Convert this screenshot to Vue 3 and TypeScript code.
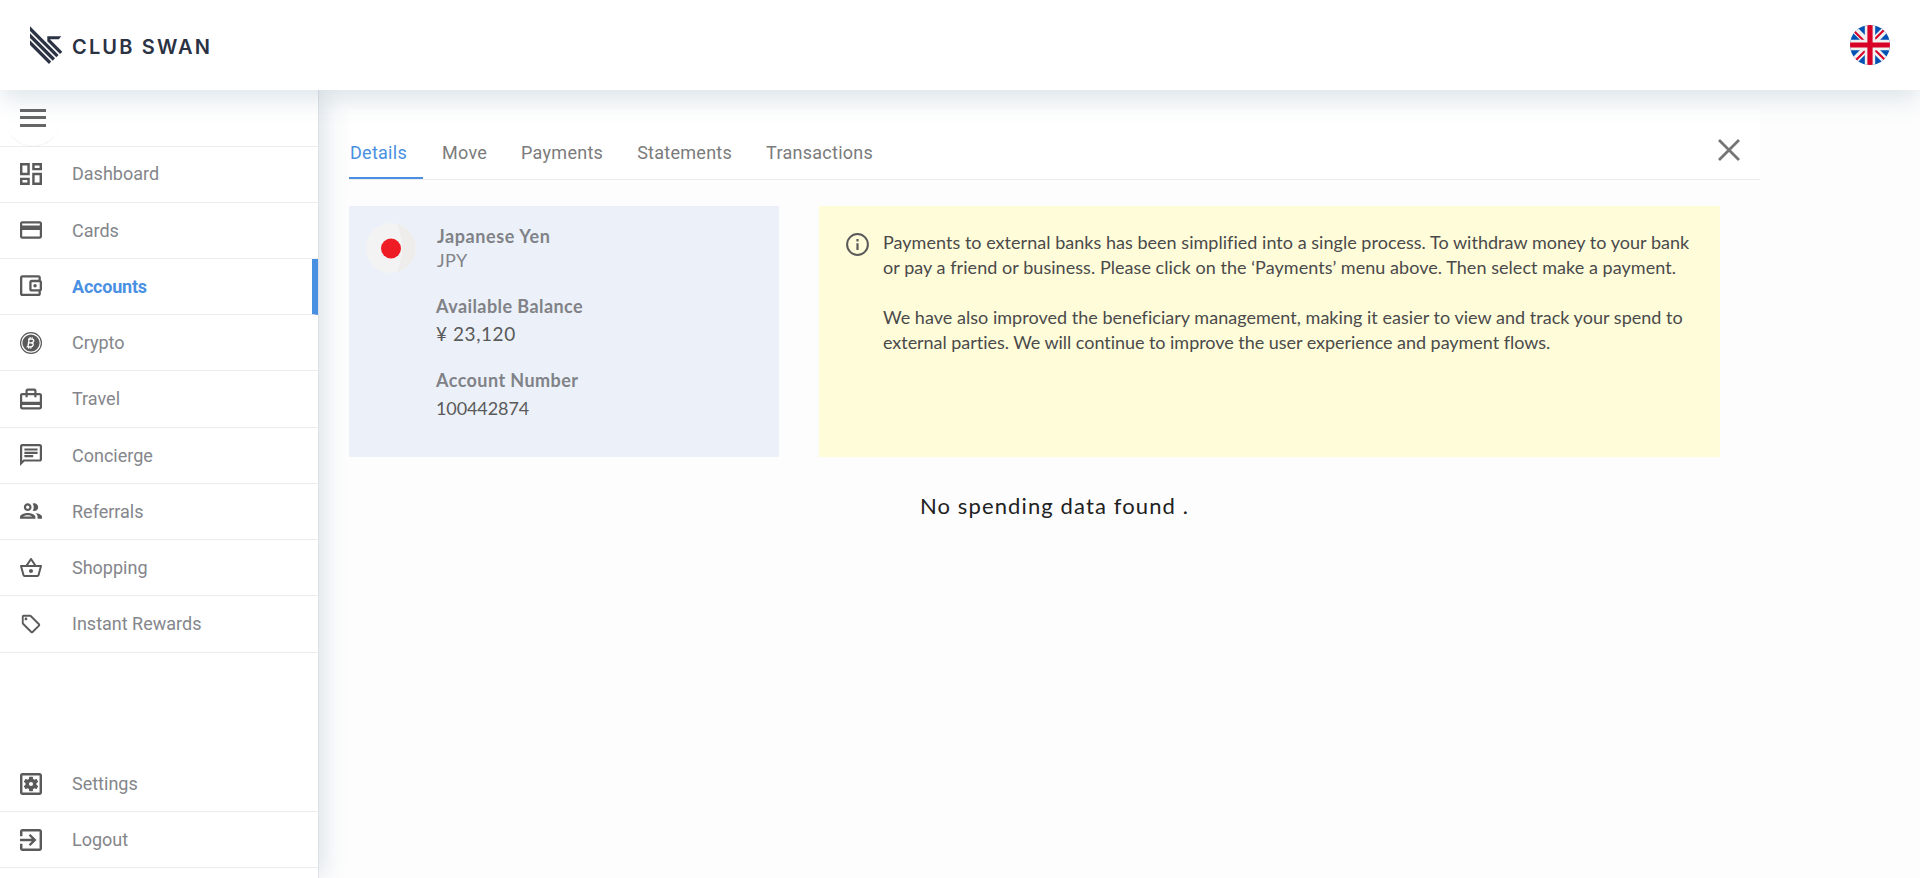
<script setup lang="ts">
interface NavItem {
  label: string
  icon: string
  active?: boolean
}

const icons: Record<string, string> = {
  dashboard: 'M19 5v2h-4V5h4M9 5v6H5V5h4m10 8v6h-4v-6h4M9 17v2H5v-2h4M21 3h-8v6h8V3zM11 3H3v10h8V3zm10 8h-8v10h8V11zm-10 4H3v6h8v-6z',
  cards: 'M20 4H4c-1.11 0-1.99.89-1.99 2L2 18c0 1.11.89 2 2 2h16c1.11 0 2-.89 2-2V6c0-1.11-.89-2-2-2zm0 14H4v-6h16v6zm0-10H4V6h16v2z',
  accounts: 'M21 7.28V5c0-1.1-.9-2-2-2H5c-1.11 0-2 .9-2 2v14c0 1.1.89 2 2 2h14c1.1 0 2-.9 2-2v-2.28c.59-.35 1-.98 1-1.72V9c0-.74-.41-1.38-1-1.72zM20 9v6h-7V9h7zM5 19V5h14v2h-6c-1.1 0-2 .9-2 2v6c0 1.1.9 2 2 2h6v2H5z',
  travel: 'M20 6h-3V4c0-1.11-.89-2-2-2H9c-1.11 0-2 .89-2 2v2H4c-1.11 0-2 .89-2 2v11c0 1.11.89 2 2 2h16c1.11 0 2-.89 2-2V8c0-1.11-.89-2-2-2zM9 4h6v2H9V4zm11 15H4v-2h16v2zm0-5H4V8h3v2h2V8h6v2h2V8h3v6z',
  concierge: 'M4 4h16v12H5.17L4 17.17V4m0-2c-1.1 0-1.99.9-1.99 2L2 22l4-4h14c1.1 0 2-.9 2-2V4c0-1.1-.9-2-2-2H4zm2 10h8v2H6v-2zm0-3h12v2H6V9zm0-3h12v2H6V6z',
  referrals: 'M9 13.75c-2.34 0-7 1.17-7 3.5V19h14v-1.75c0-2.33-4.66-3.5-7-3.5zM4.34 17c.84-.58 2.87-1.25 4.66-1.25s3.82.67 4.66 1.25H4.34zM9 12c1.93 0 3.5-1.57 3.5-3.5S10.93 5 9 5 5.5 6.57 5.5 8.5 7.07 12 9 12zm0-5c.83 0 1.5.67 1.5 1.5S9.83 10 9 10s-1.5-.67-1.5-1.5S8.17 7 9 7zm7.04 6.81c1.16.84 1.96 1.96 1.96 3.44V19h4v-1.75c0-2.02-3.5-3.17-5.96-3.44zM15 12c1.93 0 3.5-1.57 3.5-3.5S16.93 5 15 5c-.54 0-1.04.13-1.5.35.63.89 1 1.98 1 3.15s-.37 2.26-1 3.15c.46.22.96.35 1.5.35z',
  shopping: 'M22 9h-4.79l-4.38-6.56c-.19-.28-.51-.42-.83-.42s-.64.14-.83.43L6.79 9H2c-.55 0-1 .45-1 1 0 .09.01.18.04.27l2.54 9.27c.23.84 1 1.46 1.92 1.46h13c.92 0 1.69-.62 1.93-1.46l2.54-9.27L23 10c0-.55-.45-1-1-1zM12 4.8L14.8 9H9.2L12 4.8zM18.5 19l-12.99.01L3.31 11H20.7l-2.2 8zM12 13c-1.1 0-2 .9-2 2s.9 2 2 2 2-.9 2-2-.9-2-2-2z',
  rewards: 'M21.41 11.58l-9-9C12.05 2.22 11.55 2 11 2H4c-1.1 0-2 .9-2 2v7c0 .55.22 1.05.59 1.42l9 9c.36.36.86.58 1.41.58s1.05-.22 1.41-.59l7-7c.37-.36.59-.86.59-1.41s-.23-1.06-.59-1.42zM13 20.01L4 11V4h7v-.01l9 9-7 7.02zM6.5 5C5.67 5 5 5.67 5 6.5S5.67 8 6.5 8 8 7.33 8 6.5 7.33 5 6.5 5z',
  settings: 'M19 3H5c-1.11 0-2 .9-2 2v14c0 1.1.89 2 2 2h14c1.11 0 2-.9 2-2V5c0-1.1-.89-2-2-2zm0 16H5V5h14v14z',
  logout: 'M10.09 15.59L11.5 17l5-5-5-5-1.41 1.41L12.67 11H3v2h9.67l-2.58 2.59zM19 3H5c-1.11 0-2 .9-2 2v4h2V5h14v14H5v-4H3v4c0 1.1.89 2 2 2h14c1.1 0 2-.9 2-2V5c0-1.1-.9-2-2-2z',
}

const gear = 'M17.25 12c0-.23-.02-.46-.05-.68l1.48-1.16c.13-.11.17-.3.08-.45l-1.4-2.42c-.09-.15-.27-.21-.43-.15l-1.74.7c-.36-.28-.75-.51-1.18-.69l-.26-1.85c-.03-.17-.18-.3-.35-.3h-2.8c-.17 0-.32.13-.35.3l-.26 1.85c-.43.18-.82.41-1.18.69l-1.74-.7c-.16-.06-.34 0-.43.15l-1.4 2.42c-.09.15-.05.34.08.45l1.48 1.16c-.03.22-.05.45-.05.68s.02.46.05.68l-1.48 1.16c-.13.11-.17.3-.08.45l1.4 2.42c.09.15.27.21.43.15l1.74-.7c.36.28.75.51 1.18.69l.26 1.85c.03.17.18.3.35.3h2.8c.17 0 .32-.13.35-.3l.26-1.85c.43-.18.82-.41 1.18-.69l1.74.7c.16.06.34 0 .43-.15l1.4-2.42c.09-.15.05-.34-.08-.45l-1.48-1.16c.03-.22.05-.45.05-.68zM12 14a2 2 0 1 1 0-4 2 2 0 0 1 0 4z'

// Crop windows that make each 24-unit glyph fill the 22px icon box.
const boxes: Record<string, string> = {
  dashboard: '3 3 18 18',
  cards: '2 2 20 20',
  accounts: '3 2.8 19 19',
  travel: '2 1.5 20 20',
  concierge: '2 2 20 20',
  referrals: '2 2 20 20',
  shopping: '1 1 22 22',
  rewards: '0 0 24 24',
  settings: '3 3 18 18',
  logout: '3 3 18 18',
}

const mainNav: NavItem[] = [
  { label: 'Dashboard', icon: 'dashboard' },
  { label: 'Cards', icon: 'cards' },
  { label: 'Accounts', icon: 'accounts', active: true },
  { label: 'Crypto', icon: 'crypto' },
  { label: 'Travel', icon: 'travel' },
  { label: 'Concierge', icon: 'concierge' },
  { label: 'Referrals', icon: 'referrals' },
  { label: 'Shopping', icon: 'shopping' },
  { label: 'Instant Rewards', icon: 'rewards' },
]

const footNav: NavItem[] = [
  { label: 'Settings', icon: 'settings' },
  { label: 'Logout', icon: 'logout' },
]

const tabs = ['Details', 'Move', 'Payments', 'Statements', 'Transactions']
</script>

<template>
  <div class="page">
    <header class="topbar">
      <div class="brand">
        <svg class="mark" viewBox="0 0 33 39" width="33" height="39">
          <g fill="#2b3244">
            <path d="M0 .3L28.6 28.9L26.3 31.3L0 5Z" />
            <path d="M0 7.3L25 32.3L22.7 34.7L0 12Z" />
            <path d="M0 14.3L21.2 35.5L19 38L0 19Z" />
            <path d="M17.300 10.200H31.300L28.800 13.300H19.900L32.300 25.700L30 28L17.300 15.300Z" />
          </g>
        </svg>
        <svg class="wordmark" viewBox="0 0 150 26" width="150" height="26">
          <text x="-1" y="22" textLength="138" lengthAdjust="spacing">CLUB SWAN</text>
        </svg>
      </div>
      <svg class="lang" viewBox="0 0 40 40" width="40" height="40">
        <defs><clipPath id="uk"><circle cx="20" cy="20" r="20" /></clipPath></defs>
        <g clip-path="url(#uk)">
          <rect width="40" height="40" fill="#0052b4" />
          <path d="M0 0L40 40M40 0L0 40" stroke="#f0f0f0" stroke-width="7" />
          <path d="M4 6L15 17M25 14L36 3M4 37L15 26M25 25L37 37" stroke="#d80027" stroke-width="2" />
          <path d="M20 0V40M0 20H40" stroke="#f0f0f0" stroke-width="10.4" />
          <path d="M20 0V40M0 20H40" stroke="#d80027" stroke-width="5.2" />
        </g>
      </svg>
    </header>

    <div class="body">
      <aside class="sidebar">
        <div class="toggle-row">
          <button class="toggle" aria-label="Menu">
            <span></span><span></span><span></span>
          </button>
        </div>
        <nav class="nav">
          <a v-for="item in mainNav" :key="item.label" class="nav-item" :class="{ active: item.active }">
            <svg v-if="item.icon === 'crypto'" class="ico" viewBox="0 0 22 22">
              <circle cx="11" cy="11" r="10.4" fill="none" stroke="#5a5a5a" stroke-width="1.2" />
              <circle cx="11" cy="11" r="8.6" fill="#5a5a5a" />
              <path d="M9.2 6.5L7.9 15.3M8 7.2H11.6Q14.3 7.3 13.7 9.3Q13.2 10.9 10.9 10.9H8.8M10.9 10.9Q13.7 11 13.2 13Q12.7 14.9 10.2 14.9H6.6M10.2 5.2L9.9 7M12.3 5.3L12 7.1M8.900 15L8.600 16.700M11 15L10.700 16.700" fill="none" stroke="#fff" stroke-width="1.3" />
            </svg>
            <svg v-else class="ico" :viewBox="boxes[item.icon]">
              <path :d="icons[item.icon]" />
              <circle v-if="item.icon === 'accounts'" cx="16" cy="12" r="1.5" />
            </svg>
            <span>{{ item.label }}</span>
          </a>
        </nav>
        <nav class="nav foot">
          <a v-for="item in footNav" :key="item.label" class="nav-item">
            <svg class="ico" :viewBox="boxes[item.icon]">
              <path :d="icons[item.icon]" />
              <path v-if="item.icon === 'settings'" :d="gear" transform="translate(1.8 1.8) scale(.85)" />
            </svg>
            <span>{{ item.label }}</span>
          </a>
        </nav>
      </aside>

      <main class="content">
        <div class="tabbar">
          <div class="tabs">
            <a v-for="(tab, i) in tabs" :key="tab" class="tab" :class="{ current: i === 0 }">{{ tab }}</a>
          </div>
          <svg class="close" viewBox="0 0 22 22" width="22" height="22">
            <path d="M1 1L21 21M21 1L1 21" stroke="#757575" stroke-width="2.8" />
          </svg>
        </div>

        <div class="cards">
          <section class="account">
            <svg class="flag" viewBox="0 0 50 50" width="50" height="50">
              <circle cx="25" cy="25" r="25" fill="#f3f3f3" />
              <path d="M31 .8A25 25 0 0 1 31 49.2Q41 25 31 .8Z" fill="#eeedec" />
              <circle cx="25" cy="25.5" r="10" fill="#ee1c25" />
            </svg>
            <div class="details">
              <div class="strong name">Japanese Yen</div>
              <div class="code">JPY</div>
              <div class="strong bal-label">Available Balance</div>
              <div class="value bal">¥ 23,120</div>
              <div class="strong num-label">Account Number</div>
              <div class="value num">100442874</div>
            </div>
          </section>

          <section class="notice">
            <svg class="info" viewBox="0 0 23 23" width="23" height="23">
              <circle cx="11.5" cy="11.5" r="10.4" fill="none" stroke="#5a5a5a" stroke-width="2" />
              <path d="M11.5 10.200V17M11.500 6V8.400" stroke="#5a5a5a" stroke-width="2.2" />
            </svg>
            <div class="copy">
              <div class="l1">Payments to external banks has been simplified into a single process. To withdraw money to your bank</div>
              <div class="l2">or pay a friend or business. Please click on the ‘Payments’ menu above. Then select make a payment.</div>
              <div class="l3">We have also improved the beneficiary management, making it easier to view and track your spend to</div>
              <div class="l4">external parties. We will continue to improve the user experience and payment flows.</div>
            </div>
          </section>
        </div>

        <p class="empty">No spending data found .</p>
      </main>
    </div>
  </div>
</template>

<style>
body {
  margin: 0;
  overflow: hidden;
}
</style>

<style scoped>
.page {
  display: flex;
  flex-direction: column;
  width: 1920px;
  height: 878px;
  background: #fdfdfd;
  font-family: Roboto, "Liberation Sans", sans-serif;
}
.topbar {
  display: flex;
  flex: none;
  align-items: center;
  justify-content: space-between;
  box-sizing: border-box;
  height: 90px;
  padding: 0 30px;
  background: #fff;
  box-shadow: 0 10px 24px -2px rgba(70, 110, 140, 0.19);
  position: relative;
  z-index: 3;
}
.brand {
  display: flex;
  align-items: center;
  gap: 10px;
}
.wordmark {
  overflow: visible;
}
.wordmark text {
  font: 600 20px Inter, sans-serif;
  fill: #2b3244;
}
.body {
  display: flex;
  flex: 1;
  min-height: 0;
}
.sidebar {
  display: flex;
  flex: none;
  flex-direction: column;
  box-sizing: border-box;
  width: 319px;
  border-right: 1px solid #dfe1e5;
  background: #fff;
  box-shadow: 9px 0 20px -3px rgba(70, 110, 150, 0.17);
  position: relative;
  z-index: 2;
}
.toggle-row {
  box-sizing: border-box;
  flex: none;
  height: 57px;
  padding-left: 5px;
  border-bottom: 1px solid #ededee;
}
.toggle {
  display: flex;
  flex-direction: column;
  justify-content: center;
  gap: 4.3px;
  box-sizing: border-box;
  width: 56px;
  height: 55.5px;
  padding: 0 0 0 15px;
  border: 0;
  border-radius: 50%;
  background: transparent;
  box-shadow: 0 1px 1px -1px #ccc;
}
.toggle span {
  width: 26px;
  height: 3px;
  background: #666;
}
.nav {
  margin-top: -0.7px;
}
.foot {
  margin-top: auto;
  margin-bottom: 10px;
}
.nav-item {
  display: flex;
  align-items: center;
  gap: 30px;
  box-sizing: border-box;
  height: 56.25px;
  padding-left: 20px;
  border-bottom: 1px solid #ededee;
  color: #84868b;
  font-size: 18px;
}
.foot .nav-item {
  height: 56px;
}
.ico {
  width: 22px;
  height: 22px;
  fill: #5a5a5a;
}
.active {
  border-right: 6px solid #4a90e2;
  color: #4a90e2;
  font-weight: 700;
  letter-spacing: -0.2px;
}
.content {
  flex: 1;
  min-width: 0;
  padding: 20px 0 0 30px;
}
.tabbar {
  display: flex;
  justify-content: space-between;
  box-sizing: border-box;
  width: 1411px;
  height: 70px;
  padding-right: 20px;
  border-bottom: 1px solid #ebebee;
  background: #fff;
  position: relative;
  z-index: 2;
}
.tabs {
  display: flex;
}
.tab {
  box-sizing: border-box;
  height: 69px;
  padding: 31px 17px 0;
  color: #7b7b7b;
  font-size: 18px;
  line-height: 24px;
  letter-spacing: 0.27px;
}
.current {
  width: 74px;
  padding-left: 1px;
  padding-right: 0;
  margin-right: 2px;
  border-bottom: 2px solid #4a90e2;
  color: #4a90e2;
}
.close {
  margin-top: 29px;
}
.cards {
  display: flex;
  gap: 40px;
  padding-top: 26px;
}
.account {
  display: flex;
  gap: 20px;
  box-sizing: border-box;
  width: 430px;
  height: 251px;
  padding: 17px 0 0 17px;
  background: #ecf1f9;
}
.details {
  display: flex;
  flex-direction: column;
  padding-top: 1px;
  font-family: Lato, sans-serif;
  font-size: 18px;
  line-height: 24px;
}
.strong {
  color: #808287;
  font-weight: 700;
  letter-spacing: 0.43px;
}
.name {
  padding-left: 1px;
  letter-spacing: 0.6px;
}
.code {
  padding-left: 1px;
  color: #808287;
  letter-spacing: 0.4px;
}
.bal-label {
  margin-top: 22px;
}
.value {
  color: #5a5a5a;
  margin-top: 4px;
}
.bal {
  font-size: 19px;
  letter-spacing: 0.56px;
}
.num {
  letter-spacing: -0.1px;
}
.num-label {
  margin-top: 22px;
}
.notice {
  display: flex;
  gap: 14px;
  box-sizing: border-box;
  width: 901px;
  height: 251px;
  padding: 24px 0 0 27px;
  background: #fffcda;
}
.info {
  flex: none;
  margin-top: 3px;
}
.copy {
  color: #4a4a4a;
  font: 18px/25px Lato, sans-serif;
  white-space: nowrap;
}
.copy div {
  width: max-content;
}
.l1 {
  letter-spacing: 0.03px;
}
.l2 {
  letter-spacing: 0.05px;
}
.l3 {
  margin-top: 25px;
  letter-spacing: 0.03px;
}
.l4 {
  letter-spacing: -0.04px;
}
.empty {
  width: 1411px;
  margin: 35px 0 0;
  color: #212121;
  font: 22px/28px Lato, sans-serif;
  letter-spacing: 1.12px;
  text-align: center;
}
</style>
